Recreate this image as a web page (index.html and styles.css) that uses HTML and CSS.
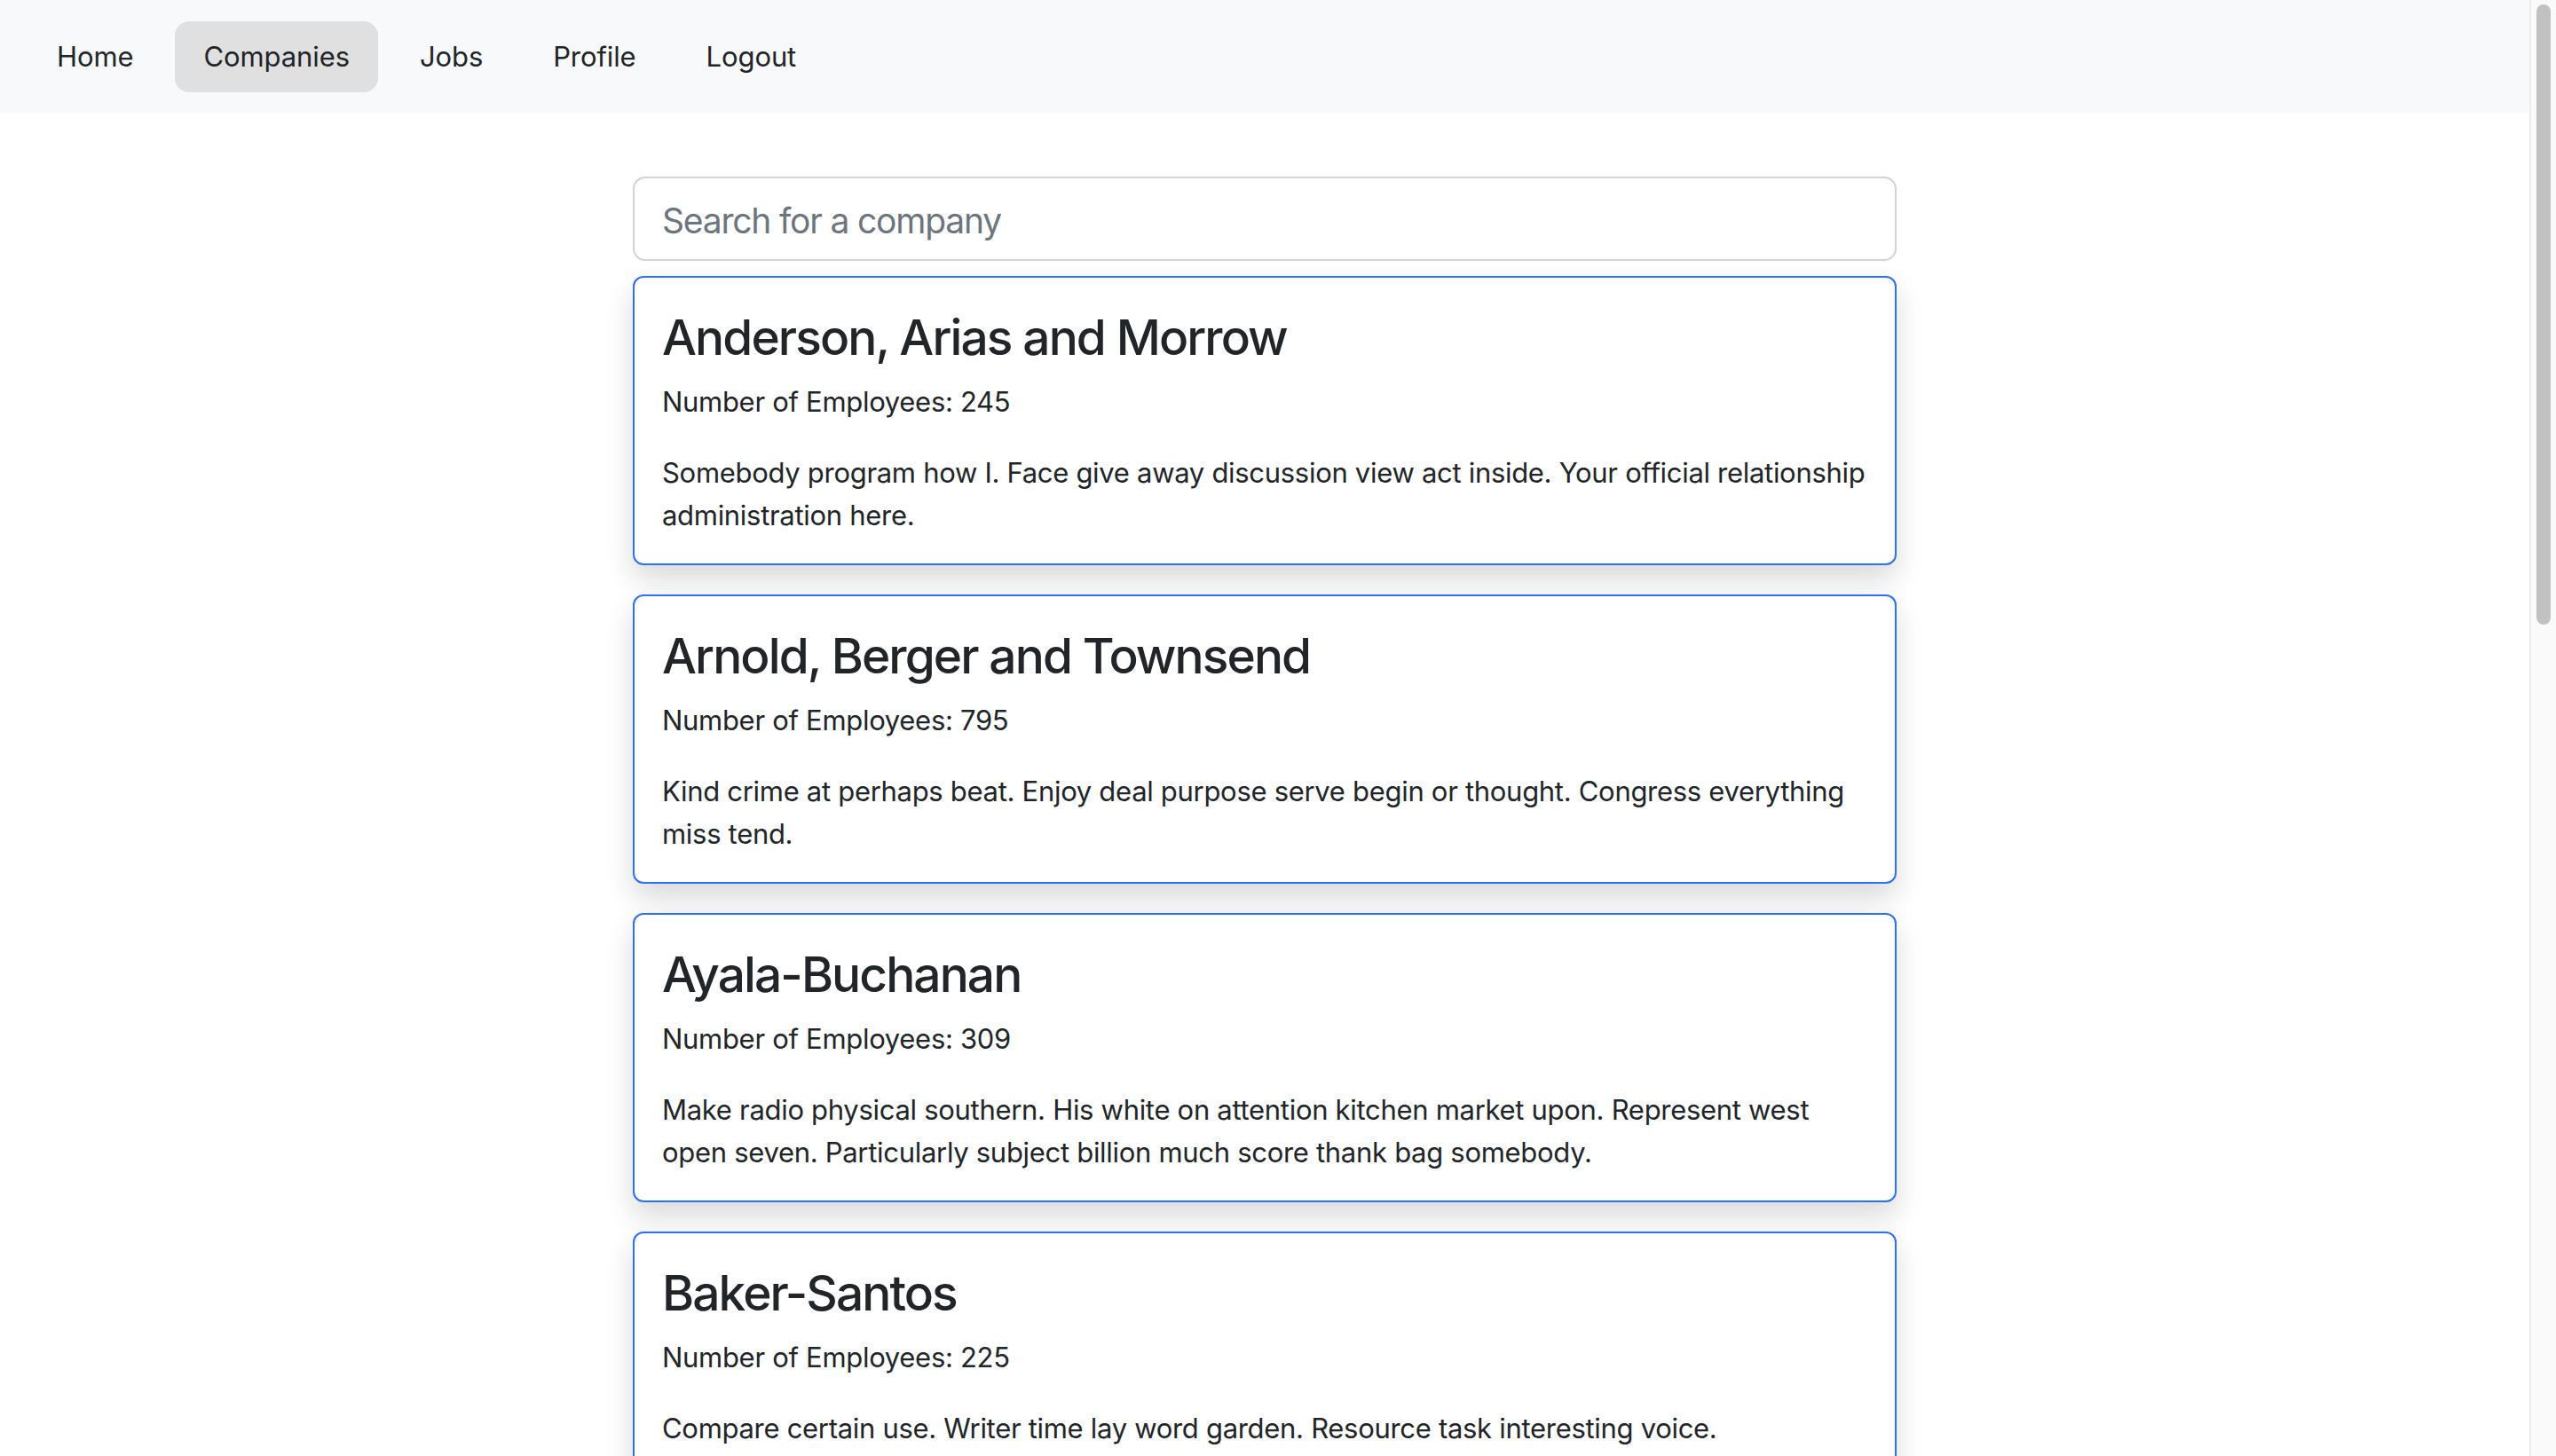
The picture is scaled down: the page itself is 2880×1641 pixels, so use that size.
FILE: index.html
```html
<!DOCTYPE html>
<html lang="en">
<head>
<meta charset="utf-8">
<title>Companies</title>
<link rel="stylesheet" href="styles.css">
</head>
<body>
<div class="page">
  <nav class="nav">
    <a class="nav-link">Home</a>
    <a class="nav-link active">Companies</a>
    <a class="nav-link">Jobs</a>
    <a class="nav-link">Profile</a>
    <a class="nav-link">Logout</a>
  </nav>
  <main class="main">
    <input class="search" type="text" placeholder="Search for a company">
    <div class="card">
      <h2 class="card-title">Anderson, Arias and Morrow</h2>
      <p class="card-sub">Number of Employees: 245</p>
      <p class="card-text">Somebody program how I. Face give away discussion view act inside. Your official relationship administration here.</p>
    </div>
    <div class="card">
      <h2 class="card-title">Arnold, Berger and Townsend</h2>
      <p class="card-sub">Number of Employees: 795</p>
      <p class="card-text">Kind crime at perhaps beat. Enjoy deal purpose serve begin or thought. Congress everything miss tend.</p>
    </div>
    <div class="card">
      <h2 class="card-title">Ayala-Buchanan</h2>
      <p class="card-sub">Number of Employees: 309</p>
      <p class="card-text">Make radio physical southern. His white on attention kitchen market upon. Represent west open seven. Particularly subject billion much score thank bag somebody.</p>
    </div>
    <div class="card">
      <h2 class="card-title">Baker-Santos</h2>
      <p class="card-sub">Number of Employees: 225</p>
      <p class="card-text">Compare certain use. Writer time lay word garden. Resource task interesting voice.</p>
    </div>
  </main>
</div>
<div class="scrollbar"><div class="thumb"></div></div>
</body>
</html>
```
FILE: styles.css
```css
html, body {
  margin: 0;
  height: 100%;
  overflow: hidden;
}
body {
  display: flex;
  font-family: Inter, "Noto Sans", "Liberation Sans", sans-serif;
  color: #212529;
  background: #fff;
}
.page {
  flex: 1;
  min-width: 0;
}
.nav {
  display: flex;
  align-items: center;
  gap: 15px;
  height: 127px;
  box-sizing: border-box;
  padding: 0 32px;
  background: #f8f9fa;
}
.nav-link {
  display: block;
  padding: 0 32px;
  height: 80px;
  line-height: 80px;
  font-size: 31px;
  letter-spacing: -0.1px;
  color: #212529;
  border-radius: 16px;
}
.nav-link.active {
  background: #e0e0e0;
}
.main {
  width: 1424px;
  margin: 0 auto;
  padding-top: 72px;
}
.search {
  display: block;
  box-sizing: border-box;
  width: 100%;
  height: 95px;
  padding: 3px 31px 0;
  font-family: inherit;
  font-size: 39px;
  letter-spacing: -1.2px;
  color: #212529;
  border: 2px solid #ced4da;
  border-radius: 14px;
  background: #fff;
  outline: none;
  margin-bottom: 17px;
}
.search::placeholder {
  color: #6c757d;
}
.card {
  border: 2px solid #2d6ff5;
  border-radius: 12px;
  padding: 34px 31px 30px;
  margin-bottom: 33px;
  box-shadow: 0 16px 32px rgba(0, 0, 0, 0.15);
  background: #fff;
}
.card-title {
  margin: 0 0 16px;
  font-size: 55px;
  font-weight: 500;
  letter-spacing: -1.9px;
  line-height: 66px;
}
.card-sub {
  margin: 0 0 32px;
  font-size: 31px;
  letter-spacing: -0.3px;
  line-height: 48px;
}
.card-text {
  margin: 0;
  font-size: 31px;
  letter-spacing: -0.3px;
  line-height: 48px;
}
.scrollbar {
  flex: none;
  width: 16px;
  background: #fafafa;
  border-left: 2px solid #ebebeb;
  padding: 5px 6px 0 6px;
}
.thumb {
  height: 699px;
  background: #c1c1c1;
  border-radius: 8px;
}
```
